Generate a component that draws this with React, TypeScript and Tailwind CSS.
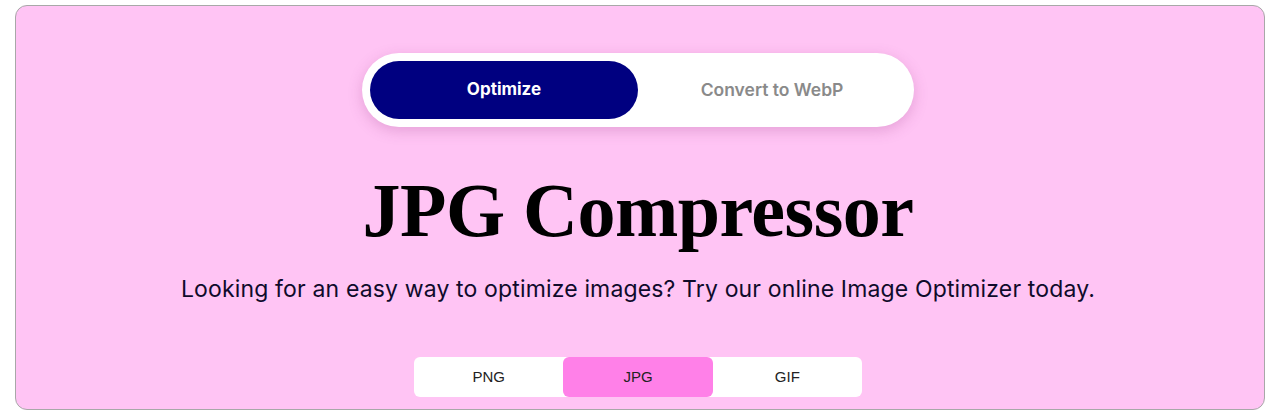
export default function App() {
  const formats = ['PNG', 'JPG', 'GIF'];
  const active = 'JPG';

  return (
    <div className="min-h-screen bg-white pt-[5px] pl-[15px] pr-[8px]">
      <div className="h-[405px] rounded-[12px] border border-[#a8a8a8] bg-[#ffc4f4] flex flex-col items-center pt-[47px] pr-[4px]">
        {/* Mode toggle */}
        <div className="w-[552px] h-[74px] rounded-full bg-white p-2 flex shadow-[0_4px_14px_rgba(150,60,130,0.25)]">
          <button className="flex-1 rounded-full bg-[#000080] text-white font-bold text-[17px] font-['Inter',sans-serif]">
            Optimize
          </button>
          <button className="flex-1 rounded-full text-[#8a8a8a] font-semibold text-[17.5px] font-['Inter',sans-serif]">
            Convert to WebP
          </button>
        </div>

        <h1 className="mt-[43px] text-[76px] leading-[80px] font-bold tracking-[-0.5px] text-black font-['Liberation_Serif',serif]">
          JPG Compressor
        </h1>

        <p className="mt-[24px] text-[23px] leading-[30px] tracking-[0.15px] text-[#0f0b2b] font-['Inter',sans-serif]">
          Looking for an easy way to optimize images? Try our online Image Optimizer today.
        </p>

        {/* Format tabs */}
        <div className="mt-[53px] w-[448px] h-[40px] rounded-[6px] bg-white flex">
          {formats.map(f => (
            <button
              key={f}
              className={`flex-1 rounded-[6px] text-[15px] text-[#222] font-['Liberation_Sans',sans-serif] ${f === active ? 'bg-[#ff80e8]' : ''}`}
            >
              {f}
            </button>
          ))}
        </div>
      </div>
    </div>
  );
}
